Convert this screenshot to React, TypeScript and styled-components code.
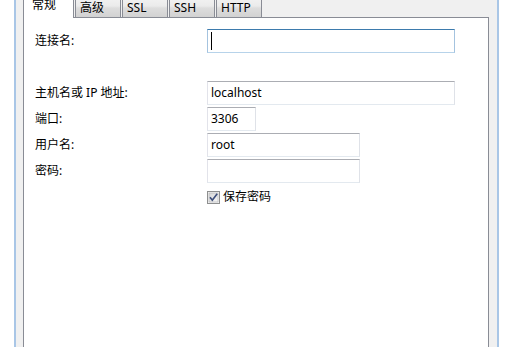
import styled, { createGlobalStyle } from "styled-components";

const GlobalStyle = createGlobalStyle`
  *, *::before, *::after { box-sizing: border-box; }
  html, body { margin: 0; padding: 0; background: #fff; overflow: hidden; }
  body {
    font-family: "Noto Sans", "Noto Sans CJK SC", sans-serif;
    font-size: 12px;
    color: #000;
  }
`;

const Window = styled.div`
  margin-left: 14px;
  width: 485px;
  height: 347px;
  border-left: 2px solid #a9c6e6;
  border-right: 2px solid #a9c6e6;
  background: #f0f0f0;
  padding: 0 8px 0 7px;
  display: flex;
  flex-direction: column;
`;

const TabStrip = styled.div`
  display: flex;
  align-items: flex-end;
  height: 23px;
  margin-top: -6px;
  position: relative;
  z-index: 1;
`;

const Tab = styled.div<{ $active?: boolean }>`
  border: 1px solid #898c95;
  line-height: 17px;
  white-space: nowrap;
  ${(p) =>
    p.$active
      ? `
    width: 51px;
    height: 24px;
    margin-bottom: -1px;
    border-bottom: none;
    background: #fff;
    padding: 1px 0 0 8px;
  `
      : `
    width: 46px;
    height: 21px;
    margin-left: 1px;
    border-bottom: none;
    background: linear-gradient(#f3f3f3, #ebebeb 45%, #dddddd 55%, #d2d2d2);
    padding: 2px 0 0 4px;
  `}
`;

const Panel = styled.div`
  flex: 1;
  background: #fff;
  border: 1px solid #898c95;
  border-bottom: none;
  padding: 11px 0 0 11px;
`;

const Form = styled.div`
  display: grid;
  grid-template-columns: 172px 1fr;
  grid-auto-rows: 24px;
  row-gap: 2px;
`;

const Label = styled.div`
  align-self: center;
  line-height: 16px;
  white-space: nowrap;
`;

const Field = styled.div<{ $width: number; $focused?: boolean }>`
  width: ${(p) => p.$width}px;
  height: 24px;
  border: 1px solid;
  border-color: ${(p) =>
    p.$focused
      ? "#3d7bad #a4c3df #b7d3ea #a4c3df"
      : "#abadb3 #dfe2e8 #e3e9ef #e2e3ea"};
  padding-left: 3px;
  line-height: 22px;
  display: flex;
  align-items: center;
`;

const Caret = styled.span`
  display: block;
  width: 1px;
  height: 18px;
  background: #000;
`;

const CheckRow = styled.label`
  grid-column: 2;
  display: flex;
  align-items: center;
  gap: 3px;
  line-height: 16px;
`;

function CheckIcon() {
  return (
    <svg width="13" height="13" viewBox="0 0 13 13">
      <defs>
        <linearGradient id="cb" x1="0" y1="0" x2="1" y2="1">
          <stop offset="0" stopColor="#d6d6d6" />
          <stop offset="1" stopColor="#f7f7f7" />
        </linearGradient>
      </defs>
      <rect x="0.5" y="0.5" width="12" height="12" fill="#f4f4f4" stroke="#8e8f8f" />
      <rect x="2" y="2" width="9" height="9" fill="url(#cb)" stroke="#aeb0b3" strokeWidth="0.6" />
      <path d="M3 6.3 L5.3 9.2 L10.2 2.8" fill="none" stroke="#3e4f7c" strokeWidth="1.7" />
    </svg>
  );
}

export default function App() {
  return (
    <>
      <GlobalStyle />
      <Window>
        <TabStrip>
          <Tab $active>常规</Tab>
          <Tab>高级</Tab>
          <Tab>SSL</Tab>
          <Tab>SSH</Tab>
          <Tab>HTTP</Tab>
        </TabStrip>
        <Panel>
          <Form>
            <Label>连接名:</Label>
            <Field $width={248} $focused>
              <Caret />
            </Field>
            <div />
            <div />
            <Label>主机名或 IP 地址:</Label>
            <Field $width={248}>localhost</Field>
            <Label>端口:</Label>
            <Field $width={49}>3306</Field>
            <Label>用户名:</Label>
            <Field $width={153}>root</Field>
            <Label>密码:</Label>
            <Field $width={153} />
            <CheckRow>
              <CheckIcon />
              保存密码
            </CheckRow>
          </Form>
        </Panel>
      </Window>
    </>
  );
}
